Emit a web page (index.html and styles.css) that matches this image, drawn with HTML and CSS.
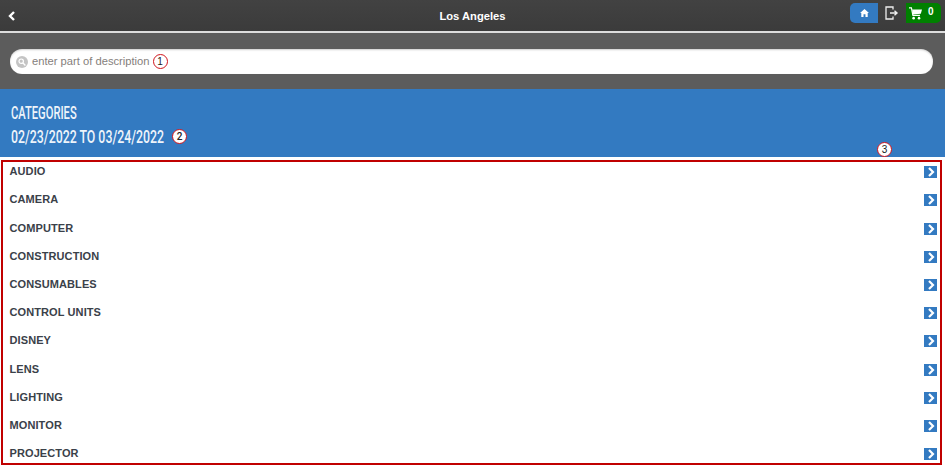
FILE: index.html
```html
<!DOCTYPE html>
<html lang="en">
<head>
    <meta charset="UTF-8">
    <title>Los Angeles</title>
    <link rel="stylesheet" href="styles.css">
</head>
<body>
    <div class="page">
        <div class="header">
            <svg class="back" width="8" height="10" viewBox="0 0 8 10"><path d="M6 1 2 5l4 4" fill="none" stroke="#fff" stroke-width="2.4"/></svg>
            <div class="title">Los Angeles</div>
            <div class="header-buttons">
                <div class="btn-home">
                    <svg width="9" height="8" viewBox="0 0 10 9"><path d="M5 0 0 4.6h1.4V9h2.5V6h2.2v3h2.5V4.6H10z" fill="#fff"/></svg>
                </div>
                <svg class="logout" width="14" height="14" viewBox="0 0 14 14"><path d="M8 3.5V1H1v12h7v-2.5" fill="none" stroke="#eee" stroke-width="1.3"/><path d="M5 7h6.5M9.5 4.8 12 7l-2.5 2.2" fill="none" stroke="#eee" stroke-width="1.4"/></svg>
                <div class="btn-cart">
                    <svg width="13" height="13" viewBox="0 0 14 14"><path d="M0 1h2.6l1.6 8h7.6" fill="none" stroke="#fff" stroke-width="1.3"/><path d="M3.4 2.6H14l-1.3 4.6-8.5.8z" fill="#fff"/><circle cx="5" cy="12" r="1.4" fill="#fff"/><circle cx="10.8" cy="12" r="1.4" fill="#fff"/></svg>
                    <span class="cart-count">0</span>
                </div>
            </div>
        </div>

        <div class="search-band">
            <div class="search-box">
                <span class="search-icon">
                    <svg width="8" height="8" viewBox="0 0 8 8"><circle cx="3.2" cy="3.2" r="2.2" fill="none" stroke="#fff" stroke-width="1.2"/><path d="m5 5 2.4 2.4" stroke="#fff" stroke-width="1.4"/></svg>
                </span>
                <span class="placeholder">enter part of description</span>
                <span class="marker">1</span>
            </div>
        </div>

        <div class="banner">
            <div class="banner-line"><span class="narrow cats">CATEGORIES</span></div>
            <div class="banner-line"><span class="narrow dates">02/23/2022 TO 03/24/2022</span><span class="marker">2</span></div>
            <span class="marker marker-3">3</span>
        </div>

        <div class="list">
            <div class="row">AUDIO<span class="arrow"><svg width="8" height="10" viewBox="0 0 8 10"><path d="M2 1l4 4-4 4" fill="none" stroke="#fff" stroke-width="2.2"/></svg></span></div>
            <div class="row">CAMERA<span class="arrow"><svg width="8" height="10" viewBox="0 0 8 10"><path d="M2 1l4 4-4 4" fill="none" stroke="#fff" stroke-width="2.2"/></svg></span></div>
            <div class="row">COMPUTER<span class="arrow"><svg width="8" height="10" viewBox="0 0 8 10"><path d="M2 1l4 4-4 4" fill="none" stroke="#fff" stroke-width="2.2"/></svg></span></div>
            <div class="row">CONSTRUCTION<span class="arrow"><svg width="8" height="10" viewBox="0 0 8 10"><path d="M2 1l4 4-4 4" fill="none" stroke="#fff" stroke-width="2.2"/></svg></span></div>
            <div class="row">CONSUMABLES<span class="arrow"><svg width="8" height="10" viewBox="0 0 8 10"><path d="M2 1l4 4-4 4" fill="none" stroke="#fff" stroke-width="2.2"/></svg></span></div>
            <div class="row">CONTROL UNITS<span class="arrow"><svg width="8" height="10" viewBox="0 0 8 10"><path d="M2 1l4 4-4 4" fill="none" stroke="#fff" stroke-width="2.2"/></svg></span></div>
            <div class="row">DISNEY<span class="arrow"><svg width="8" height="10" viewBox="0 0 8 10"><path d="M2 1l4 4-4 4" fill="none" stroke="#fff" stroke-width="2.2"/></svg></span></div>
            <div class="row">LENS<span class="arrow"><svg width="8" height="10" viewBox="0 0 8 10"><path d="M2 1l4 4-4 4" fill="none" stroke="#fff" stroke-width="2.2"/></svg></span></div>
            <div class="row">LIGHTING<span class="arrow"><svg width="8" height="10" viewBox="0 0 8 10"><path d="M2 1l4 4-4 4" fill="none" stroke="#fff" stroke-width="2.2"/></svg></span></div>
            <div class="row">MONITOR<span class="arrow"><svg width="8" height="10" viewBox="0 0 8 10"><path d="M2 1l4 4-4 4" fill="none" stroke="#fff" stroke-width="2.2"/></svg></span></div>
            <div class="row">PROJECTOR<span class="arrow"><svg width="8" height="10" viewBox="0 0 8 10"><path d="M2 1l4 4-4 4" fill="none" stroke="#fff" stroke-width="2.2"/></svg></span></div>
        </div>
    </div>
</body>
</html>
```

FILE: styles.css
```css
html, body {
    margin: 0;
    padding: 0;
    height: 468px;
    overflow: hidden;
    background-color: #fff;
}

.page {
    width: 945px;
    font-family: "Liberation Sans", Arial, sans-serif;
}

.header {
    position: relative;
    display: flex;
    align-items: center;
    justify-content: center;
    height: 31px;
    background: linear-gradient(#424242, #3b3b3b);
    border-bottom: 2px solid #ddd;
}

.back {
    position: absolute;
    left: 8px;
    top: 11px;
}

.title {
    color: #fff;
    font-size: 11.2px;
    font-weight: bold;
}

.header-buttons {
    position: absolute;
    right: 4px;
    top: 3px;
    display: flex;
    align-items: center;
}

.btn-home {
    display: flex;
    align-items: center;
    justify-content: center;
    width: 28px;
    height: 20px;
    margin-right: 7px;
    background-color: #337ac1;
    border-radius: 5px 0 0 5px;
}

.logout {
    margin-right: 7px;
}

.btn-cart {
    display: flex;
    align-items: center;
    gap: 6px;
    width: 35px;
    height: 20px;
    padding-left: 3px;
    box-sizing: border-box;
    background-color: #008000;
    border-radius: 0 5px 5px 0;
    color: #fff;
    font-size: 10px;
    font-weight: bold;
}

.cart-count {
    margin-bottom: 3px;
}

.search-band {
    height: 56px;
    padding: 16px 12px 0 10px;
    box-sizing: border-box;
    background-color: #5c5c5c;
}

.search-box {
    display: flex;
    align-items: center;
    height: 25px;
    padding-left: 6px;
    background-color: #fff;
    border-radius: 12px;
    box-shadow: inset 0 1px 2px rgba(0, 0, 0, 0.2);
}

.search-icon {
    display: flex;
    align-items: center;
    justify-content: center;
    width: 12px;
    height: 12px;
    margin-right: 4px;
    background-color: #c4c4c4;
    border-radius: 50%;
}

.placeholder {
    color: #85807c;
    font-size: 11.2px;
    margin-bottom: 1px;
}

.marker {
    display: inline-flex;
    align-items: center;
    justify-content: center;
    width: 15px;
    height: 15px;
    margin-left: 3px;
    box-sizing: border-box;
    background-color: #fff;
    border: 1.5px solid #d0141c;
    border-radius: 50%;
    color: #222;
    font-size: 10px;
}

.banner {
    position: relative;
    height: 68px;
    padding-top: 11px;
    box-sizing: border-box;
    background-color: #337ac1;
    color: #eef4fa;
}

.banner-line {
    display: flex;
    align-items: center;
    height: 24px;
    padding-left: 11px;
    font-family: Roboto, sans-serif;
    font-size: 18px;
    font-weight: 500;
}

.narrow {
    transform-origin: left center;
    white-space: nowrap;
}

.cats {
    transform: scaleX(0.62);
}

.dates {
    width: 158px;
    transform: scaleX(0.685);
}

.marker-3 {
    position: absolute;
    left: 877px;
    top: 53px;
    margin: 0;
}

.list {
    height: 305px;
    margin: 3px 3px 0 1px;
    border: 2px solid #c00000;
    box-sizing: border-box;
    overflow: hidden;
}

.row {
    display: flex;
    justify-content: space-between;
    height: 28.2px;
    padding: 3.3px 3px 0 6.5px;
    box-sizing: border-box;
    color: #3a4149;
    font-size: 11px;
    line-height: 13px;
    letter-spacing: 0.1px;
    font-weight: bold;
}

.arrow {
    display: flex;
    align-items: center;
    justify-content: center;
    width: 13px;
    height: 12px;
    margin-top: 1px;
    background-color: #337ac1;
}
```
